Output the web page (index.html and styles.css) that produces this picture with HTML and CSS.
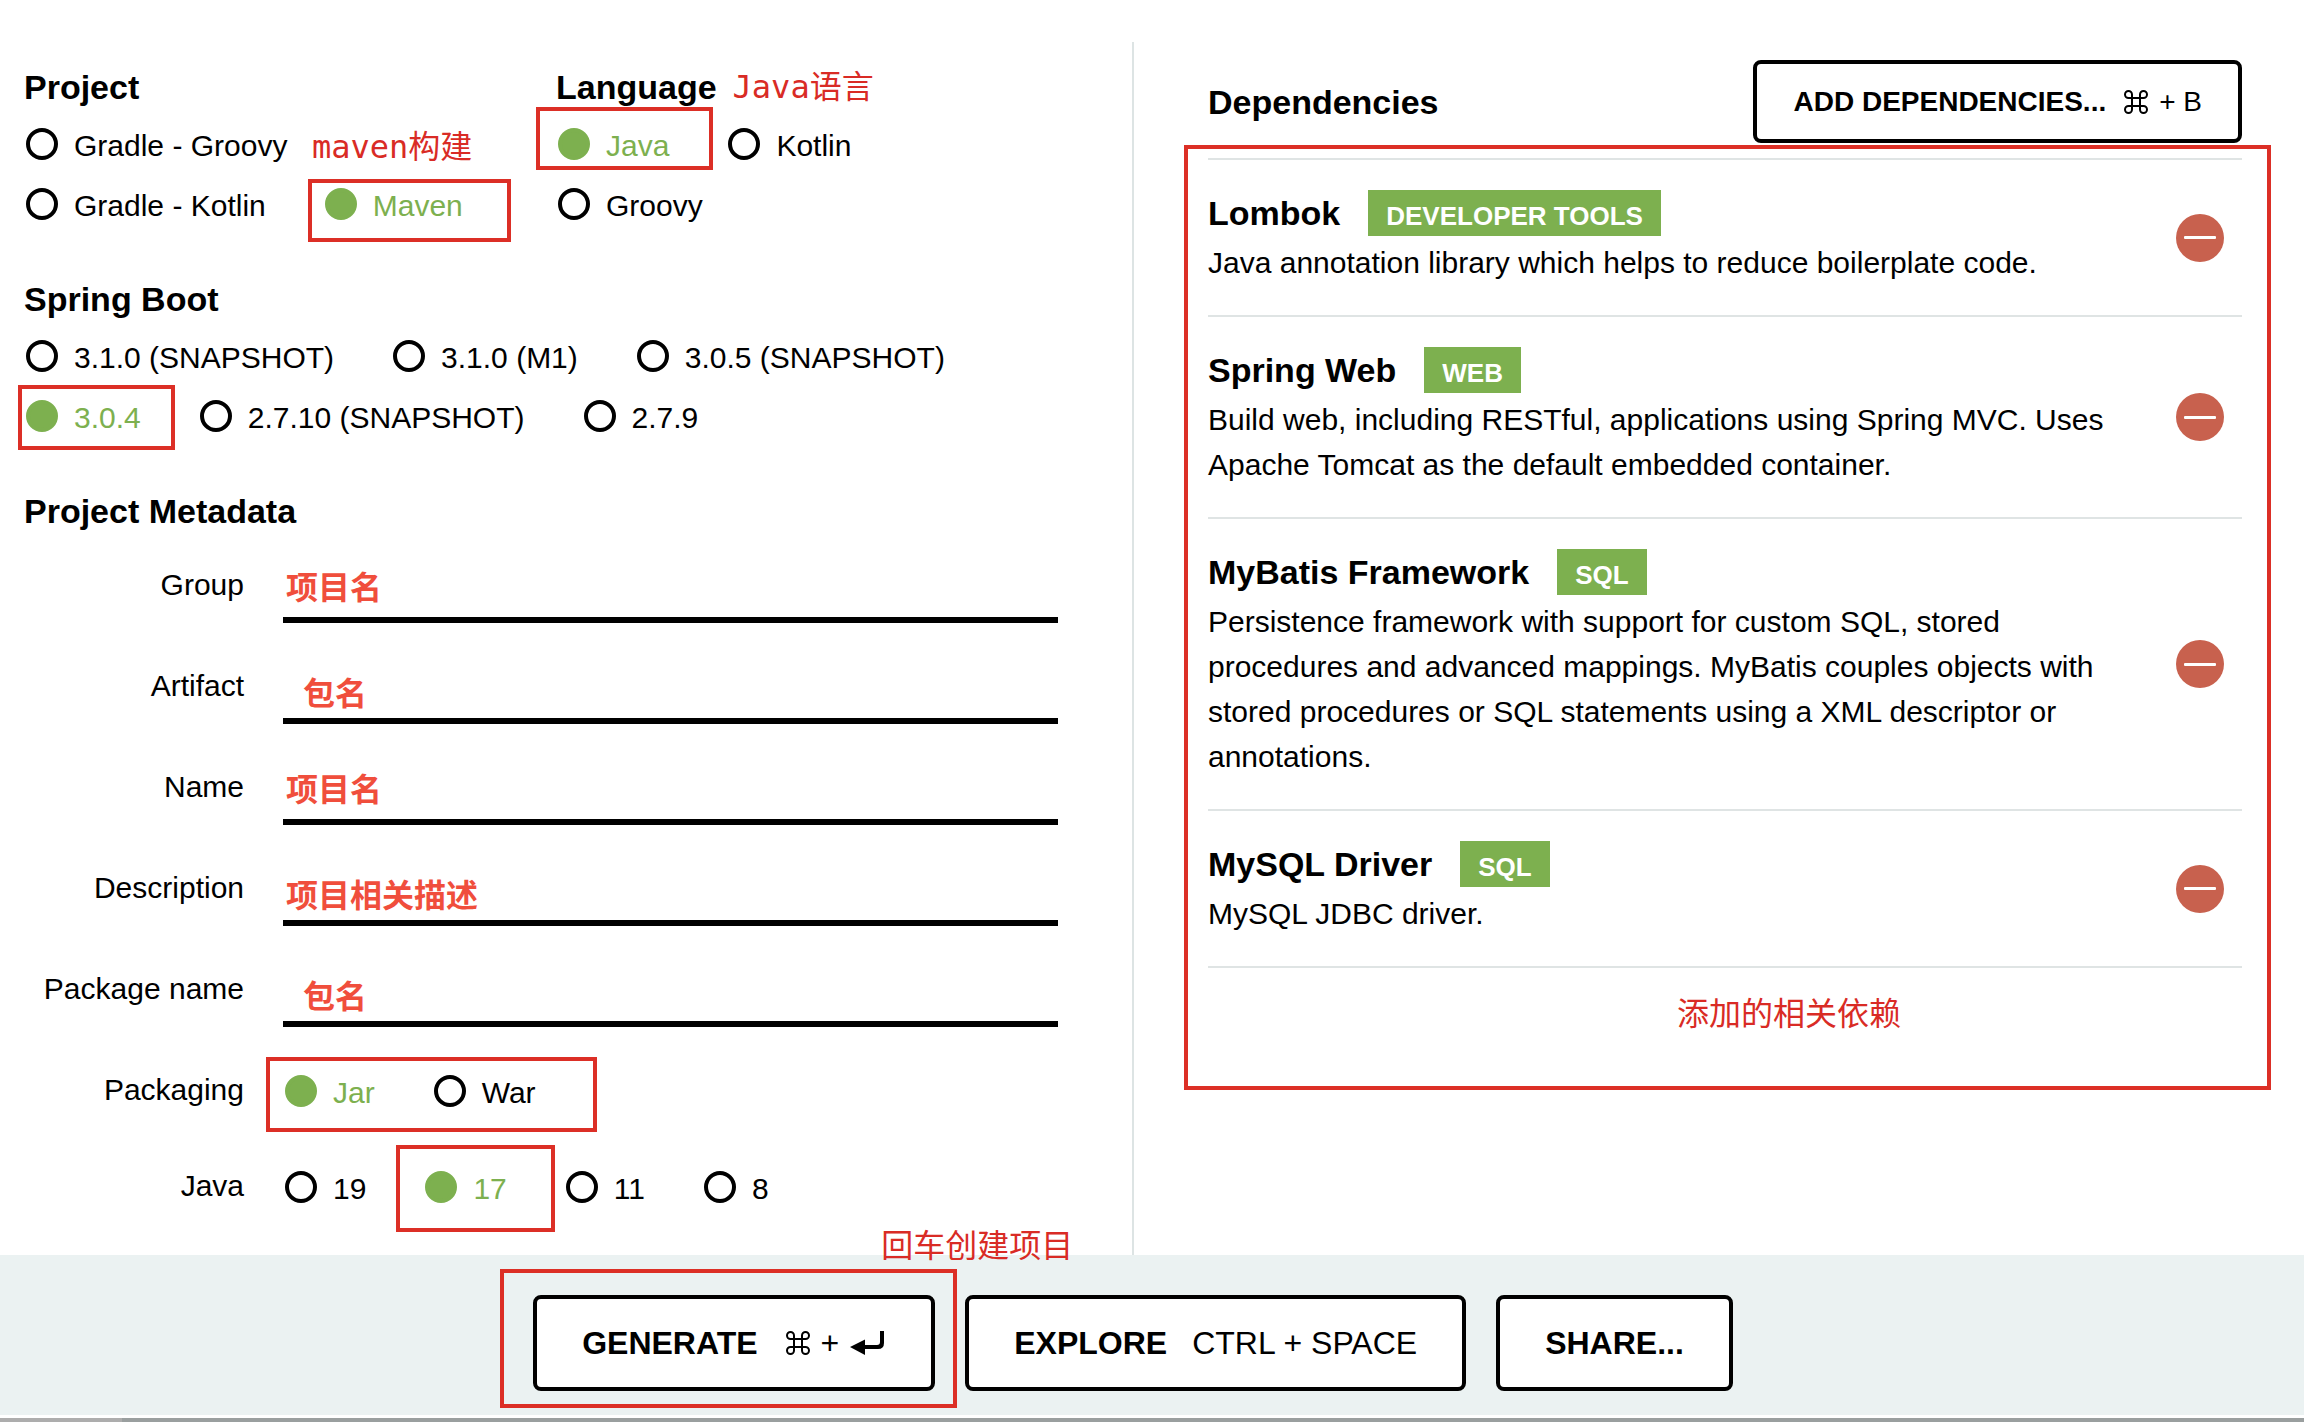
FILE: index.html
```html
<!DOCTYPE html>
<html lang="en">
<head>
<meta charset="utf-8">
<meta name="viewport" content="width=device-width, initial-scale=1">
<title>Spring Initializr</title>
<link rel="stylesheet" href="styles.css">
</head>
<body>
<main class="main">
  <form class="settings">
    <div class="pair">
      <fieldset class="group">
        <legend class="heading">Project</legend>
        <div class="options">
          <label class="option"><input type="radio" name="project"><span>Gradle - Groovy</span></label>
          <label class="option"><input type="radio" name="project"><span>Gradle - Kotlin</span></label>
          <label class="option"><input type="radio" name="project" checked><span>Maven</span><i class="mark mark-maven"></i></label>
          <span class="note note-maven">maven构建</span>
        </div>
      </fieldset>
      <fieldset class="group">
        <legend class="heading">Language<span class="note">Java语言</span></legend>
        <div class="options options-language">
          <label class="option"><input type="radio" name="language" checked><span>Java</span><i class="mark mark-language"></i></label>
          <label class="option"><input type="radio" name="language"><span>Kotlin</span></label>
          <label class="option"><input type="radio" name="language"><span>Groovy</span></label>
        </div>
      </fieldset>
    </div>

    <fieldset class="group">
      <legend class="heading">Spring Boot</legend>
      <div class="options">
        <label class="option"><input type="radio" name="boot"><span>3.1.0 (SNAPSHOT)</span></label>
        <label class="option"><input type="radio" name="boot"><span>3.1.0 (M1)</span></label>
        <label class="option"><input type="radio" name="boot"><span>3.0.5 (SNAPSHOT)</span></label>
        <label class="option"><input type="radio" name="boot" checked><span>3.0.4</span><i class="mark mark-boot"></i></label>
        <label class="option"><input type="radio" name="boot"><span>2.7.10 (SNAPSHOT)</span></label>
        <label class="option"><input type="radio" name="boot"><span>2.7.9</span></label>
      </div>
    </fieldset>

    <section class="metadata">
      <h2 class="heading">Project Metadata</h2>
      <div class="field">
        <label for="group">Group</label>
        <input class="text high" id="group" type="text" value="项目名">
      </div>
      <div class="field">
        <label for="artifact">Artifact</label>
        <input class="text indent" id="artifact" type="text" value="包名">
      </div>
      <div class="field">
        <label for="name">Name</label>
        <input class="text high" id="name" type="text" value="项目名">
      </div>
      <div class="field">
        <label for="description">Description</label>
        <input class="text" id="description" type="text" value="项目相关描述">
      </div>
      <div class="field">
        <label for="package">Package name</label>
        <input class="text indent" id="package" type="text" value="包名">
      </div>
      <div class="field field-radio" role="radiogroup" aria-labelledby="packaging">
        <span id="packaging">Packaging</span>
        <div class="options">
          <label class="option"><input type="radio" name="packaging" checked><span>Jar</span></label>
          <label class="option"><input type="radio" name="packaging"><span>War</span></label>
          <i class="mark mark-packaging"></i>
        </div>
      </div>
      <div class="field field-radio" role="radiogroup" aria-labelledby="java">
        <span id="java">Java</span>
        <div class="options">
          <label class="option"><input type="radio" name="java"><span>19</span></label>
          <label class="option"><input type="radio" name="java" checked><span>17</span><i class="mark mark-java"></i></label>
          <label class="option"><input type="radio" name="java"><span>11</span></label>
          <label class="option"><input type="radio" name="java"><span>8</span></label>
        </div>
      </div>
    </section>
  </form>

  <div class="divider"></div>

  <section class="dependencies">
    <header class="dependencies-head">
      <h2 class="heading">Dependencies</h2>
      <button class="button button-small" type="button"><b>ADD DEPENDENCIES...</b><span class="keys"><svg class="command" viewBox="0 0 24 24" aria-label="Command"><path d="M8 8H4.500A3.500 3.500 0 1 1 8 4.500V19.500A3.500 3.500 0 1 1 4.500 16H19.500A3.500 3.500 0 1 1 16 19.500V4.500A3.500 3.500 0 1 1 19.500 8H8"/></svg><span>+ B</span></span></button>
    </header>
    <div class="list-wrap">
      <ul class="list">
        <li class="item">
          <div class="item-body">
            <h3 class="item-title">Lombok<span class="tag">DEVELOPER TOOLS</span></h3>
            <p>Java annotation library which helps to reduce boilerplate code.</p>
          </div>
          <button class="remove" type="button" aria-label="Remove Lombok"></button>
        </li>
        <li class="item">
          <div class="item-body">
            <h3 class="item-title">Spring Web<span class="tag">WEB</span></h3>
            <p>Build web, including RESTful, applications using Spring MVC. Uses Apache Tomcat as the default embedded container.</p>
          </div>
          <button class="remove" type="button" aria-label="Remove Spring Web"></button>
        </li>
        <li class="item">
          <div class="item-body">
            <h3 class="item-title">MyBatis Framework<span class="tag">SQL</span></h3>
            <p>Persistence framework with support for custom SQL, stored procedures and advanced mappings. MyBatis couples objects with stored procedures or SQL statements using a XML descriptor or annotations.</p>
          </div>
          <button class="remove" type="button" aria-label="Remove MyBatis Framework"></button>
        </li>
        <li class="item">
          <div class="item-body">
            <h3 class="item-title">MySQL Driver<span class="tag">SQL</span></h3>
            <p>MySQL JDBC driver.</p>
          </div>
          <button class="remove" type="button" aria-label="Remove MySQL Driver"></button>
        </li>
      </ul>
      <i class="mark mark-dependencies"></i>
      <span class="note note-dependencies">添加的相关依赖</span>
    </div>
  </section>
</main>

<footer class="footer">
  <div class="footer-item">
    <button class="button" type="button"><b>GENERATE</b><span class="keys"><svg class="command" viewBox="0 0 24 24" aria-label="Command"><path d="M8 8H4.500A3.500 3.500 0 1 1 8 4.500V19.500A3.500 3.500 0 1 1 4.500 16H19.500A3.500 3.500 0 1 1 16 19.500V4.500A3.500 3.500 0 1 1 19.500 8H8"/></svg><span>+</span><svg class="enter" viewBox="0 0 36 24" aria-label="Enter"><path d="M0 16 15 8.500V14H27Q30 14 30 11V0H34V12Q34 18 28 18H15V24Z"/></svg></span></button>
    <i class="mark mark-generate"></i>
    <span class="note note-generate">回车创建项目</span>
  </div>
  <button class="button" type="button"><b>EXPLORE</b><span>CTRL + SPACE</span></button>
  <button class="button" type="button"><b>SHARE...</b></button>
</footer>
<div class="edge"></div>
</body>
</html>
```

FILE: styles.css
```css
* {
  box-sizing: border-box;
}

body {
  display: flex;
  flex-direction: column;
  min-height: 100vh;
  margin: 0;
  background: #fff;
  color: #000;
  font: 30px/45px "Liberation Sans", Arial, "Noto Sans CJK SC", sans-serif;
}

h2, h3, p, ul, fieldset, legend {
  margin: 0;
  padding: 0;
}

.main {
  display: grid;
  flex: 1;
  grid-template-columns: 1fr 2px 1fr;
  padding: 42px 38px 0 0;
}

.divider {
  background: #dde4e4;
}

/* Project settings */

.settings {
  padding: 25px 74px 40px 24px;
}

.pair {
  display: grid;
  grid-template-columns: 1fr 1fr;
  column-gap: 30px;
}

.group {
  min-width: 0;
  margin-bottom: 45px;
  border: 0;
}

.heading {
  display: flex;
  gap: 16px;
  font-size: 34px;
  font-weight: 700;
  line-height: 40px;
}

.options {
  position: relative;
  display: flex;
  flex-wrap: wrap;
  column-gap: 59px;
  padding-left: 2px;
}

.group .options {
  margin-top: 7px;
}

.group .option {
  height: 60px;
}

.options-language {
  max-width: 360px;
}

.option {
  position: relative;
  display: flex;
  align-items: center;
  gap: 16px;
  line-height: 32px;
  white-space: nowrap;
}

.option span {
  padding-top: 3px;
}

.option input {
  width: 32px;
  height: 32px;
  margin: 0;
  border: 4px solid #000;
  border-radius: 50%;
  appearance: none;
  background: #fff;
}

.option input:checked {
  border-color: #7db04f;
  background: #7db04f;
}

.option input:checked + span {
  color: #7db04f;
}

.field {
  display: grid;
  grid-template-columns: 220px 1fr;
  column-gap: 39px;
  margin-top: 41px;
  line-height: 44px;
}

.heading + .field {
  margin-top: 32px;
}

.field > :first-child {
  text-align: right;
}

.field-radio .option {
  height: 46px;
}

.field-radio + .field-radio {
  margin-top: 50px;
}

.text {
  width: 100%;
  height: 60px;
  padding: 0 3px;
  border: 0;
  border-bottom: 6px solid #000;
  border-radius: 0;
  outline: 0;
  background: none;
  color: #f04e3c;
  font: 700 32px "Noto Sans CJK SC", sans-serif;
}

.high {
  padding-bottom: 10px;
}

.indent {
  padding-left: 20px;
}

/* Buttons */

.button {
  display: flex;
  align-items: center;
  justify-content: center;
  gap: 25px;
  height: 96px;
  padding: 0 45px;
  border: 4px solid #000;
  border-radius: 8px;
  background: #fff;
  color: #000;
  font: 32px/40px "Liberation Sans", Arial, sans-serif;
  white-space: nowrap;
}

.button-small {
  gap: 18px;
  height: 83px;
  padding: 0 36px;
  font-size: 28px;
}

.keys {
  display: flex;
  align-items: center;
  gap: 11px;
}

.command {
  width: 24px;
  height: 24px;
  margin-left: 3px;
  fill: none;
  stroke: #000;
  stroke-width: 2;
}

.button-small .command {
  margin-left: 0;
}

.enter {
  width: 36px;
  height: 24px;
}

/* Dependencies */

.dependencies {
  padding: 18px 24px 0 74px;
}

.dependencies-head {
  display: flex;
  align-items: center;
  justify-content: space-between;
  margin-bottom: 15px;
}

.list-wrap {
  position: relative;
}

.list {
  border-top: 2px solid #dfe4e4;
  list-style: none;
}

.item {
  display: flex;
  align-items: center;
  justify-content: space-between;
  padding: 30px 18px 30px 0;
  border-bottom: 2px solid #dfe4e4;
}

.item-body {
  max-width: 920px;
}

.item-title {
  display: flex;
  align-items: baseline;
  gap: 28px;
  margin-bottom: 4px;
  font-size: 34px;
  line-height: 46px;
}

.tag {
  padding: 6px 18px 0;
  background: #7db04f;
  color: #fff;
  font-size: 26px;
  line-height: 40px;
}

.remove {
  display: flex;
  align-items: center;
  justify-content: center;
  width: 48px;
  height: 48px;
  padding: 0;
  border: 0;
  border-radius: 50%;
  background: #c8614e;
}

.remove::before {
  width: 32px;
  height: 3px;
  border-radius: 1px;
  background: #fff;
  content: "";
}

/* Footer */

.footer {
  display: flex;
  justify-content: center;
  gap: 30px;
  padding: 40px 38px 24px 0;
  background: #ebf2f2;
}

.footer-item {
  position: relative;
}

.edge {
  height: 7px;
  border-top: 3px solid #fff;
  background: linear-gradient(90deg, #adadad 122px, #9a9f9f 122px);
}

/* Red annotations laid over the page */

.note {
  color: #d92b25;
  font: 32px/40px "DejaVu Sans Mono", "Noto Sans CJK SC", monospace;
  white-space: nowrap;
}

.note-maven,
.note-dependencies,
.note-generate {
  position: absolute;
}

.note-maven {
  top: 13px;
  left: 288px;
}

.note-dependencies {
  top: calc(100% + 26px);
  left: 469px;
}

.note-generate {
  top: -69px;
  left: 348px;
}

.mark {
  position: absolute;
  border: 4px solid #dc2f26;
  pointer-events: none;
}

.mark-maven {
  top: 5px;
  left: -17px;
  width: 203px;
  height: 63px;
}

.mark-language {
  top: -7px;
  left: -22px;
  width: 177px;
  height: 63px;
}

.mark-boot {
  top: -1px;
  left: -8px;
  width: 157px;
  height: 65px;
}

.mark-packaging {
  top: -11px;
  left: -17px;
  width: 331px;
  height: 75px;
}

.mark-java {
  top: -19px;
  left: -29px;
  width: 159px;
  height: 87px;
}

.mark-generate {
  inset: -26px -22px -17px -33px;
}

.mark-dependencies {
  inset: -13px -29px -122px -24px;
}
```
